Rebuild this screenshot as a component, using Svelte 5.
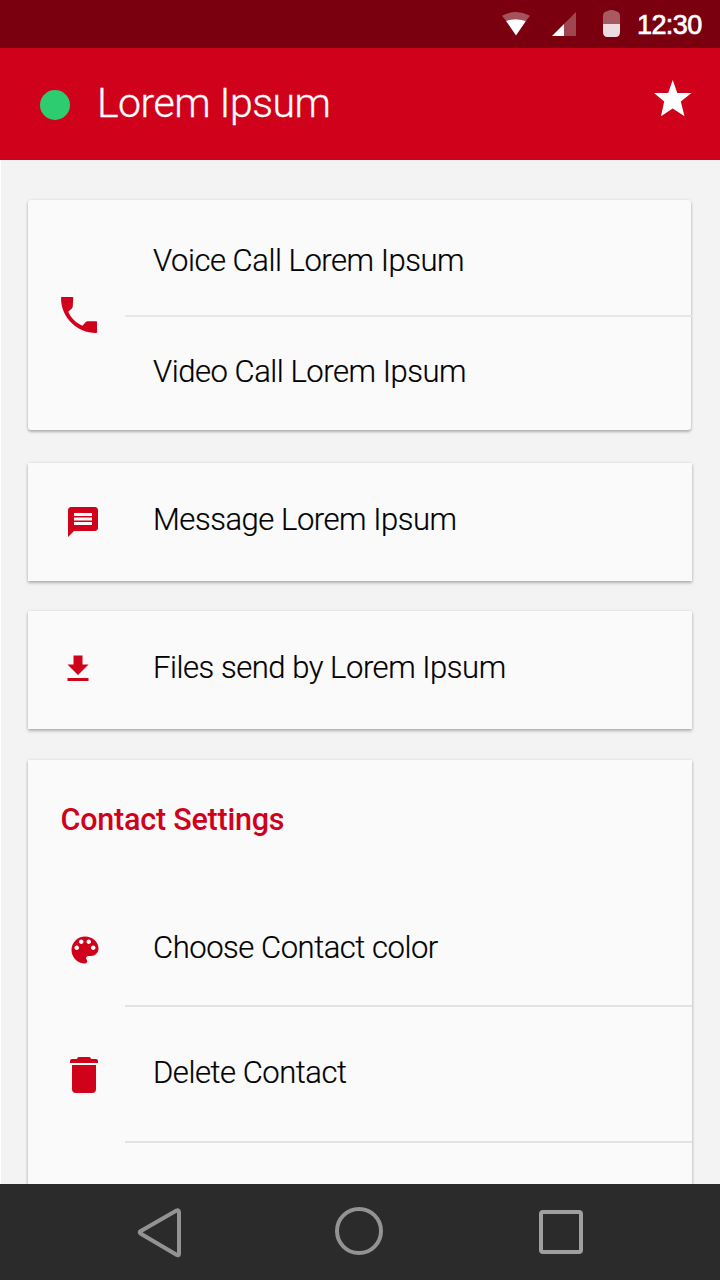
<script>
  const actions = [
    { id: 'message', label: 'Message Lorem Ipsum' },
    { id: 'files', label: 'Files send by Lorem Ipsum' }
  ];
</script>

<div class="screen">
  <header class="status">
    <svg class="wifi" width="30" height="26" viewBox="0 0 30 26">
      <path d="M1 4.700Q15-2.700 29 4.700L24.900 10Q15 6.300 5.100 10Z" fill="#fff" opacity=".32" />
      <path d="M5.100 10Q15 6.300 24.900 10L15 24.600Z" fill="#fff" />
    </svg>
    <svg class="signal" width="24" height="24" viewBox="0 0 24 24">
      <path d="M24 0V24H12V12Z" fill="#fff" opacity=".28" />
      <path d="M12 12V24H0Z" fill="#fff" />
    </svg>
    <svg class="battery" width="17" height="27" viewBox="0 0 17 27">
      <path d="M0 14V6Q0 2 4 1.300Q8.500-1.300 13 1.300Q17 2 17 6V14Z" fill="#fff" opacity=".35" />
      <path d="M0 14H17V22Q17 27 12.500 27H4.500Q0 27 0 22Z" fill="#eddde0" />
    </svg>
    <span class="clock">12:30</span>
  </header>

  <div class="appbar">
    <span class="presence"></span>
    <h1>Lorem Ipsum</h1>
    <svg class="star" width="38" height="37" viewBox="0 0 38 37">
      <path d="M18.700 0L23.300 12.900H37.500L26.800 21.400L30.500 36.200L18.700 28.400L7 36.200L10.200 21.400L0 12.900H14.200Z" fill="#fff" />
    </svg>
  </div>

  <main>
    <section class="card calls">
      <div class="glyph">
        <svg width="48" height="48" viewBox="0 0 24 24"><path d="M3.400 3H8.500C9 3 9.100 3.200 9.100 3.500L8.900 7.600C8.900 8 8.700 8.400 8.400 8.700L6.600 10.400C8 13.500 10.500 16 13.700 17.400L15.400 15.500C15.600 15.200 15.900 15.100 16.300 15.100H20.600C20.900 15.100 21 15.200 21 15.500V20.500C21 20.900 20.900 21 20.500 21C11 21 3 13.300 3 3.500Q3 3 3.400 3Z" /></svg>
      </div>
      <div class="lines">
        <div class="row voice">Voice Call Lorem Ipsum</div>
        <div class="row video">Video Call Lorem Ipsum</div>
      </div>
    </section>

    {#each actions as a}
      <section class="card single {a.id}">
        <div class="glyph">
          {#if a.id === 'message'}
            <svg width="36" height="36" viewBox="0 0 24 24"><path d="M20 2H4c-1.100 0-1.990.900-1.990 2L2 22l4-4h14c1.100 0 2-.900 2-2V4c0-1.100-.900-2-2-2zM6 9h12v2H6V9zm12 5H6v-2h12v2zm0-6H6V6h12v2z" /></svg>
          {:else}
            <svg width="36" height="36" viewBox="0 0 24 24"><path d="M19 9h-4V3H9v6H5l7 7 7-7zM5 18v2h14v-2H5z" /></svg>
          {/if}
        </div>
        <div class="row">{a.label}</div>
      </section>
    {/each}

    <section class="card settings">
      <h2>Contact Settings</h2>
      <div class="item color">
        <div class="glyph">
          <svg width="36" height="36" viewBox="0 0 24 24"><path d="M12 3c-4.970 0-9 4.030-9 9s4.030 9 9 9c.830 0 1.500-.670 1.500-1.500 0-.390-.150-.740-.390-1.010-.230-.260-.380-.610-.380-.990 0-.830.670-1.500 1.500-1.500H16c2.760 0 5-2.240 5-5 0-4.420-4.030-8-9-8zm-5.500 9c-.830 0-1.500-.670-1.500-1.500S5.670 9 6.500 9 8 9.670 8 10.500 7.330 12 6.500 12zm3-4C8.670 8 8 7.330 8 6.500S8.670 5 9.500 5s1.500.670 1.500 1.500S10.330 8 9.500 8zm5 0c-.830 0-1.500-.670-1.500-1.500S13.670 5 14.500 5s1.500.670 1.500 1.500S15.330 8 14.500 8zm3 4c-.830 0-1.500-.670-1.500-1.500S16.670 9 17.500 9s1.500.670 1.500 1.500-.670 1.500-1.500 1.500z" /></svg>
        </div>
        <div class="row">Choose Contact color</div>
      </div>
      <div class="item delete">
        <div class="glyph">
          <svg width="28" height="36" viewBox="0 0 28 36"><path d="M2 8H26V32Q26 36 22 36H6Q2 36 2 32ZM0 6V4Q0 2 2 2H7Q7 0 9 0H19Q21 0 21 2H26Q28 2 28 4V6Z" /></svg>
        </div>
        <div class="row">Delete Contact</div>
      </div>
    </section>
  </main>

  <nav>
    <svg class="back" width="46" height="52" viewBox="0 0 46 52"><path d="M42 5.500V46.500Q42 49.300 39.500 47.800L3.500 26.500Q2 25.300 3.500 24.200L39.500 3.600Q42 2.600 42 5.500Z" /></svg>
    <svg class="home" width="48" height="48" viewBox="0 0 48 48"><circle cx="24" cy="24" r="22" /></svg>
    <svg class="recent" width="44" height="44" viewBox="0 0 44 44"><rect x="2" y="2" width="40" height="40" rx="2" stroke="#9f9f9f" /></svg>
  </nav>
</div>

<style>
  :global(body) { margin: 0; }
  .screen {
    width: 720px; height: 1280px; overflow: hidden;
    display: flex; flex-direction: column;
    background: #f3f3f3; color: #000;
    font-family: Roboto, sans-serif;
  }
  svg { display: block; flex: none; }
  .status {
    height: 48px; flex: none; box-sizing: border-box;
    display: flex; align-items: flex-start; justify-content: flex-end;
    padding-right: 18px; background: #7a000f;
  }
  .wifi { margin: 11px 21px 0 0; }
  .signal { margin: 12px 27px 0 0; }
  .battery { margin: 10px 17px 0 0; }
  .clock {
    font: 27px/50px "Liberation Sans", Arial, sans-serif; color: #fff;
    width: 65px; letter-spacing: -.6px; -webkit-text-stroke: .7px #fff; white-space: nowrap;
  }
  .appbar {
    height: 112px; flex: none; box-sizing: border-box;
    display: flex; align-items: flex-start;
    padding: 0 28px 0 40px; background: #d0021b; color: #fff;
  }
  .presence { width: 30px; height: 30px; margin-top: 42px; border-radius: 50%; background: #2ecc71; }
  h1 {
    flex: 1; margin: 30px 0 0 27px;
    font-size: 41px; line-height: 50px; font-weight: 300; letter-spacing: -.5px;
    -webkit-text-stroke: .3px #fff;
  }
  .star { margin-top: 32px; }
  main {
    flex: 1; min-height: 0; overflow: hidden;
    display: flex; flex-direction: column;
    padding: 40px 28px 0 27px; border-left: 1px solid #fff;
  }
  .card {
    flex: none; box-sizing: border-box; display: flex;
    background: #fafafa;
    box-shadow: 0 2px 3px rgba(0, 0, 0, .26), 0 0 3px rgba(0, 0, 0, .1);
  }
  .calls { height: 230px; width: 663px; border-radius: 3px; margin-bottom: 33px; }
  .single { height: 118px; margin-bottom: 30px; }
  .files { margin-bottom: 31px; }
  .settings { height: 500px; flex-direction: column; }
  .glyph { width: 97px; flex: none; box-sizing: border-box; fill: #d0021b; }
  .lines { flex: 1; margin-right: -1px; }
  .row {
    flex: 1; box-sizing: border-box; padding: 37px 0 0 28px;
    font-size: 31px; line-height: 40px; font-weight: 300; letter-spacing: -.46px; white-space: nowrap;
    -webkit-text-stroke: .2px #000;
  }
  .voice { height: 117px; padding-top: 41px; border-bottom: 2px solid #e7e7e7; }
  .video { padding-top: 35px; }
  .calls .glyph { padding: 91px 0 0 26.500px; }
  .message .glyph { padding: 41px 0 0 37px; }
  .files .glyph { padding: 40px 0 0 32px; }
  h2 {
    margin: 0; padding: 40px 0 0 32.500px; height: 125px; box-sizing: border-box;
    font-size: 30.500px; line-height: 40px; font-weight: 500; letter-spacing: -.22px; color: #d0021b;
  }
  .item { display: flex; }
  .item .row { border-bottom: 2px solid #e2e2e2; }
  .color { height: 122px; }
  .color .row { padding-top: 43px; }
  .color .glyph { padding: 47px 0 0 39px; }
  .delete { height: 136px; }
  .delete .row { padding-top: 46px; }
  .delete .glyph { padding: 50px 0 0 42px; }
  nav {
    height: 96px; flex: none; box-sizing: border-box;
    display: flex; align-items: flex-start; background: #2b2b2b;
    padding-left: 137px; fill: none; stroke: #939393; stroke-width: 4;
  }
  .back { margin-top: 23px; }
  .home { margin: 23px 0 0 152px; }
  .recent { margin: 26px 0 0 156px; }
</style>
